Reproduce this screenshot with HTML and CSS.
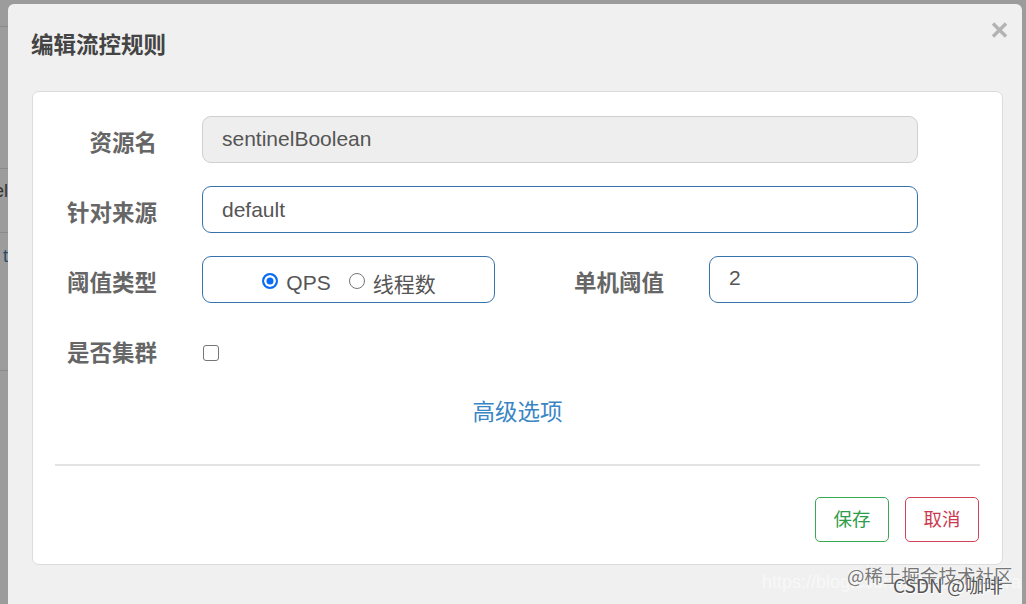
FILE: index.html
```html
<!DOCTYPE html>
<html lang="zh-CN">
<head>
<meta charset="utf-8">
<title>编辑流控规则</title>
<link rel="stylesheet" href="styles.css">
</head>
<body>
<div class="page">
  <div class="pg-row pg-r1"></div>
  <div class="pg-row pg-r2"></div>
  <div class="pg-row pg-r3"><span class="pg-text">el</span></div>
  <div class="pg-row pg-r4"><span class="pg-text pg-blue">t</span></div>
</div>

<div class="modal">
  <div class="modal-header">
    <h4 class="modal-title">编辑流控规则</h4>
    <button class="close" type="button" aria-label="close">
      <svg width="17" height="16" viewBox="0 0 17 16"><path d="M2 1.5 L15 14.5 M15 1.5 L2 14.5" stroke="#b3b3b3" stroke-width="3.4" stroke-linecap="butt" fill="none"/></svg>
    </button>
  </div>
  <div class="panel">
    <div class="form-row">
      <label class="label">资源名</label>
      <div class="input readonly wide">sentinelBoolean</div>
    </div>
    <div class="form-row">
      <label class="label">针对来源</label>
      <div class="input wide">default</div>
    </div>
    <div class="form-row">
      <label class="label">阈值类型</label>
      <div class="input radio-box">
        <span class="radio checked"></span><span class="radio-text">QPS</span>
        <span class="radio"></span><span class="radio-text cjk">线程数</span>
      </div>
      <label class="label label-2">单机阈值</label>
      <div class="input narrow">2</div>
    </div>
    <div class="form-row last">
      <label class="label">是否集群</label>
      <span class="checkbox"></span>
    </div>
    <div class="advanced"><a class="link">高级选项</a></div>
    <div class="divider"></div>
    <div class="footer">
      <button class="btn btn-save" type="button">保存</button>
      <button class="btn btn-cancel" type="button">取消</button>
    </div>
  </div>
</div>

<div class="wm wm-url">https://blog.csdn.net/weixin_java</div>
<div class="wm wm-juejin">@稀土掘金技术社区</div>
<div class="wm wm-csdn">CSDN @咖啡</div>
</body>
</html>
```

FILE: styles.css
```css
html, body {
  margin: 0;
  padding: 0;
}
body {
  width: 1026px;
  height: 604px;
  overflow: hidden;
  background: #9c9c9c;
  position: relative;
  font-family: "Liberation Sans", "Noto Sans CJK SC", sans-serif;
}

/* background page peeking on the left */
.page {
  width: 8px;
  overflow: hidden;
}
.pg-row {
  border-bottom: 1px solid #8a8a8a;
  position: relative;
}
.pg-r1 { height: 26px; }
.pg-r2 { height: 141px; }
.pg-r3 { height: 63px; }
.pg-r4 { height: 137px; }
.pg-text {
  position: absolute;
  right: 0;
  font-size: 18px;
  line-height: 22px;
  color: #333;
}
.pg-r3 .pg-text { top: 11px; }
.pg-r4 .pg-text { top: 12px; }
.pg-blue { color: #2b4a6a; }

/* modal */
.modal {
  position: absolute;
  left: 8px;
  top: 4px;
  width: 1014px;
  height: 600px;
  background: #f0f0f0;
  border-radius: 6px 6px 0 0;
}
.modal-header {
  position: relative;
  height: 87px;
  padding-left: 23px;
  box-sizing: border-box;
}
.modal-title {
  margin: 0;
  padding-top: 24px;
  font-family: "Noto Sans CJK SC", sans-serif;
  font-size: 22.5px;
  line-height: 30px;
  font-weight: 700;
  color: #444;
}
.close {
  position: absolute;
  right: 13px;
  top: 16px;
  width: 20px;
  height: 20px;
  padding: 0;
  border: 0;
  background: none;
  display: flex;
  align-items: center;
  justify-content: center;
}

.panel {
  margin-left: 24px;
  width: 971px;
  height: 474px;
  box-sizing: border-box;
  background: #fff;
  border: 1px solid #dcdcdc;
  border-radius: 7px;
  padding-top: 24px;
}

.form-row {
  display: flex;
  align-items: center;
  height: 47px;
  margin-bottom: 23px;
}
.form-row.last {
  height: 47px;
  margin-bottom: 0;
}
.label {
  width: 124px;
  flex: none;
  text-align: right;
  padding-top: 2px;
  margin-right: 45px;
  font-family: "Noto Sans CJK SC", sans-serif;
  font-size: 22.5px;
  line-height: 30px;
  font-weight: 700;
  color: #666;
}
.label-2 {
  width: auto;
  margin-left: 79px;
}
.input {
  height: 47px;
  box-sizing: border-box;
  border: 1px solid #3772ab;
  border-radius: 9px;
  padding: 0 19px;
  display: flex;
  align-items: center;
  font-size: 21px;
  color: #555;
  background: #fff;
}
.input.readonly {
  background: #eeeeee;
  border-color: #cfcfcf;
  padding-bottom: 2px;
}
.wide { width: 716px; }
.narrow { width: 209px; padding-bottom: 3px; }
.radio-box {
  width: 293px;
  justify-content: center;
  padding: 6px 0 0 1px;
}
.radio {
  width: 16px;
  height: 16px;
  box-sizing: border-box;
  border-radius: 50%;
  border: 1.5px solid #767676;
  background: #fff;
  flex: none;
  margin-right: 8px;
  margin-top: -4px;
}
.radio.checked {
  border: 2px solid #0a6cf5;
  background: #0a6cf5;
  box-shadow: inset 0 0 0 2.5px #fff;
}
.radio-text {
  margin-right: 18px;
  color: #555;
}
.radio-text.cjk {
  margin-right: 0;
  font-family: "Noto Sans CJK SC", sans-serif;
}
.checkbox {
  width: 16px;
  height: 16px;
  box-sizing: border-box;
  border: 1.5px solid #767676;
  border-radius: 3px;
  margin-left: 1px;
  margin-top: 6px;
}

.advanced {
  text-align: center;
  margin-top: 21px;
  height: 32px;
}
.link {
  font-family: "Noto Sans CJK SC", sans-serif;
  font-size: 22.5px;
  line-height: 32px;
  color: #3a86c4;
}
.divider {
  margin: 38px 22px 0 22px;
  height: 2px;
  background: #e3e3e3;
}
.footer {
  display: flex;
  justify-content: flex-end;
  gap: 16px;
  padding-right: 23px;
  margin-top: 31px;
}
.btn {
  width: 74px;
  height: 45px;
  box-sizing: border-box;
  border-radius: 5px;
  background: #fff;
  font-family: "Noto Sans CJK SC", sans-serif;
  font-size: 18.5px;
  line-height: 24px;
  padding: 0 0 3px 0;
}
.btn-save {
  border: 1px solid #3aa956;
  color: #2f9c49;
}
.btn-cancel {
  border: 1px solid #cf4459;
  color: #cb3a50;
}

/* watermarks */
.wm {
  position: absolute;
  white-space: nowrap;
  font-family: "Noto Sans CJK SC", sans-serif;
}
.wm-url {
  left: 762px;
  top: 572px;
  font-family: "Liberation Sans", sans-serif;
  font-size: 18px;
  color: rgba(255, 255, 255, 0.55);
}
.wm-juejin {
  left: 847px;
  top: 562px;
  font-size: 18.5px;
  line-height: 26px;
  color: #777;
  text-shadow: 0 0 1px #fff, 0 0 2px #fff;
}
.wm-csdn {
  left: 893px;
  top: 572px;
  font-size: 19px;
  line-height: 26px;
  color: #555;
  text-shadow: 0 0 1px #fff, 1px 1px 1px #fff;
}
```
